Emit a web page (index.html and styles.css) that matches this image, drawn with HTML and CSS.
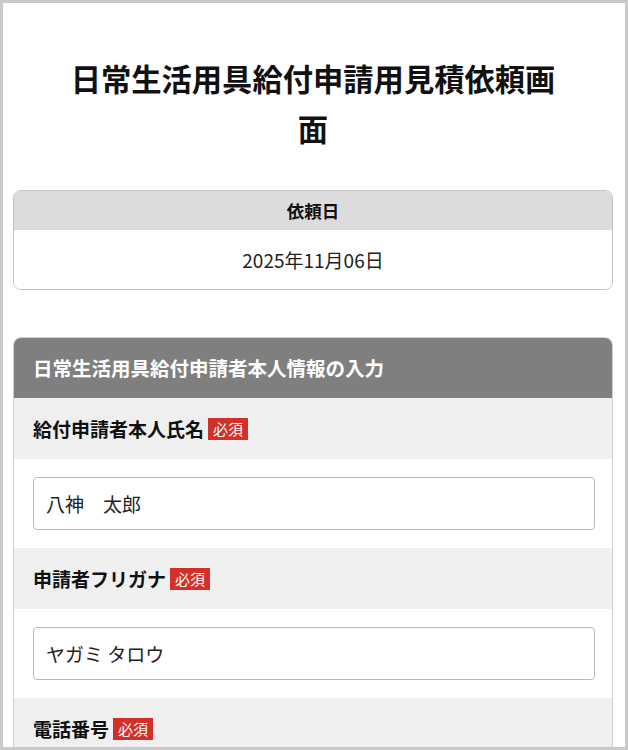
FILE: index.html
```html
<!DOCTYPE html>
<html lang="ja">
<head>
<meta charset="utf-8">
<title>日常生活用具給付申請用見積依頼画面</title>
<link rel="stylesheet" href="styles.css">
</head>
<body>
<div class="frame">
  <h1 class="page-title">日常生活用具給付申請用見積依頼画面</h1>

  <section class="date-card">
    <div class="date-head">依頼日</div>
    <div class="date-body">2025年11月06日</div>
  </section>

  <section class="form-card">
    <div class="form-head">日常生活用具給付申請者本人情報の入力</div>

    <div class="field-label">給付申請者本人氏名<span class="badge">必須</span></div>
    <div class="field-body"><div class="input">八神　太郎</div></div>

    <div class="field-label">申請者フリガナ<span class="badge">必須</span></div>
    <div class="field-body"><div class="input">ヤガミ タロウ</div></div>

    <div class="field-label">電話番号<span class="badge">必須</span></div>
    <div class="field-body"><div class="input"></div></div>
  </section>
</div>
</body>
</html>
```

FILE: styles.css
```css
html, body {
  margin: 0;
  padding: 0;
  background: #ffffff;
}

body {
  font-family: "Noto Sans CJK JP", "Noto Sans", sans-serif;
  color: #111111;
}

.frame {
  box-sizing: border-box;
  width: 628px;
  height: 750px;
  overflow: hidden;
  border: 3px solid #c9c9c9;
  padding: 0 12px 0 10px;
  background: #ffffff;
}

.page-title {
  margin: 50px 0 37px;
  padding: 0 48px;
  font-size: 30.3px;
  line-height: 50px;
  font-weight: 700;
  text-align: center;
  color: #111111;
}

.date-card {
  border: 1px solid #c2c2c2;
  border-radius: 8px;
  overflow: hidden;
  margin-bottom: 47px;
}

.date-head {
  height: 39px;
  background: #dcdcdc;
  font-size: 17.5px;
  font-weight: 700;
  line-height: 39px;
  text-align: center;
}

.date-body {
  height: 59px;
  background: #ffffff;
  font-size: 19px;
  line-height: 59px;
  text-align: center;
  color: #222222;
}

.form-card {
  border: 1px solid #cfcfcf;
  border-radius: 8px 8px 0 0;
  overflow: hidden;
}

.form-head {
  height: 60px;
  background: #7f7f7f;
  color: #ffffff;
  font-size: 19.5px;
  font-weight: 700;
  line-height: 60px;
  padding-left: 19px;
}

.field-label {
  display: flex;
  align-items: center;
  height: 61px;
  background: #efefef;
  padding-left: 19px;
  font-size: 19px;
  font-weight: 700;
  color: #111111;
}

.badge {
  display: inline-block;
  margin-left: 4px;
  padding: 0 5px;
  height: 22px;
  line-height: 22px;
  background: #d23029;
  color: #ffffff;
  font-size: 15px;
  font-weight: 400;
}

.field-body {
  background: #ffffff;
  padding: 18px 17px 18px 19px;
}

.input {
  box-sizing: border-box;
  height: 53px;
  border: 1px solid #b9b9b9;
  border-radius: 4px;
  padding-left: 12px;
  font-size: 19px;
  line-height: 51px;
  color: #222222;
}
```
